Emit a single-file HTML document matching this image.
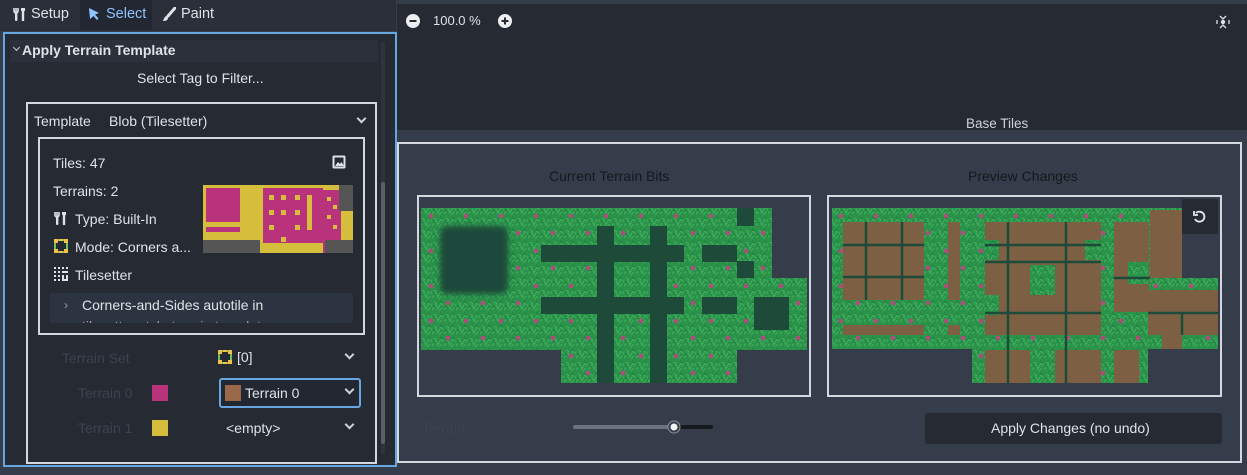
<!DOCTYPE html>
<html><head><meta charset="utf-8"><style>
*{box-sizing:border-box;margin:0;padding:0}
body{width:1247px;height:475px;background:#363d4a;font-family:"Liberation Sans","DejaVu Sans",sans-serif;font-size:14px;color:#dfe2e6;position:relative;overflow:hidden}
.a{position:absolute}
.t{position:absolute;white-space:nowrap}
.chev{position:absolute;width:7px;height:7px;border-right:2px solid #cfd3d9;border-bottom:2px solid #cfd3d9;transform:rotate(45deg)}
</style></head><body>
<div class="a" style="left:0;top:0;width:396px;height:31px;background:#2a2f39"></div>
<div class="a" style="left:80px;top:0;width:72px;height:30px;background:#222731"></div>
<svg class="a" style="left:13px;top:7px" width="14" height="15" viewBox="0 0 14 15"><path d="M3 1v5M1 1v3a2 2 0 0 0 4 0V1" stroke="#dfe2e6" stroke-width="1.6" fill="none"/><rect x="2" y="6" width="2.4" height="8" rx="1" fill="#dfe2e6"/><path d="M10 1v13" stroke="#dfe2e6" stroke-width="2.4"/><path d="M8 1h4v3h-4z" fill="#dfe2e6"/></svg>
<div class="t" style="left:31px;top:6px;font-size:14.5px">Setup</div>
<svg class="a" style="left:87px;top:7px" width="14" height="15" viewBox="0 0 14 15"><path d="M2 1l10 5-4 1.5 3.5 4-1.5 1.5-3.5-4L3 12z" fill="#8ec4ff"/></svg>
<div class="t" style="left:106px;top:6px;font-size:14.5px;color:#8ec4ff">Select</div>
<svg class="a" style="left:162px;top:7px" width="14" height="15" viewBox="0 0 14 15"><path d="M13 1L6 9" stroke="#dfe2e6" stroke-width="3" stroke-linecap="round"/><path d="M5 9c-2 0-3 2-4 5 3 0 5-1 5-3z" fill="#dfe2e6"/></svg>
<div class="t" style="left:181px;top:6px;font-size:14.5px">Paint</div>

<div class="a" style="left:3px;top:32px;width:394px;height:435px;border:2px solid #68a6e2;background:#252a33"></div>
<div class="a" style="left:10px;top:40px;width:368px;height:22px;background:#2b303a"></div>
<div class="chev" style="left:14px;top:45px;width:5px;height:5px;border-width:1.5px"></div>
<div class="t" style="left:22px;top:42px;font-weight:bold;font-size:14px">Apply Terrain Template</div>
<div class="a" style="left:381px;top:42px;width:4px;height:412px;background:#2e333c;border-radius:2px"></div>
<div class="a" style="left:381px;top:182px;width:4px;height:262px;background:#5a5f68;border-radius:2px"></div>
<div class="t" style="left:137px;top:70px">Select Tag to Filter...</div>

<div class="a" style="left:26px;top:102px;width:351px;height:362px;border:2px solid #d4d8de"></div>
<div class="t" style="left:34px;top:113px">Template</div>
<div class="t" style="left:109px;top:113px">Blob (Tilesetter)</div>
<div class="chev" style="left:358px;top:115px"></div>
<div class="a" style="left:38px;top:137px;width:327px;height:198px;border:2px solid #d4d8de"></div>
<div class="t" style="left:53px;top:155px">Tiles: 47</div>
<svg class="a" style="left:332px;top:155px" width="14" height="14" viewBox="0 0 14 14"><rect x="0.5" y="0.5" width="13" height="13" rx="1.5" fill="#dfe2e6"/><rect x="2.5" y="2.5" width="9" height="9" fill="#252a33"/><path d="M3 11l3-4 2 2 1.5-2 2.5 4z" fill="#dfe2e6"/></svg>
<div class="t" style="left:53px;top:183px">Terrains: 2</div>
<svg class="a" style="left:203px;top:185px" width="150" height="68" viewBox="0 0 150 68">
<rect width="150" height="68" fill="#d4be3c"/>
<rect x="3" y="3" width="34" height="34" fill="#b8327c"/>
<rect x="3" y="42" width="34" height="5" fill="#b8327c"/>
<rect x="60" y="3" width="60" height="55" fill="#b8327c"/>
<g fill="#d4be3c"><rect x="66" y="10" width="5" height="5"/><rect x="78" y="10" width="5" height="5"/><rect x="92" y="10" width="5" height="5"/><rect x="66" y="25" width="5" height="5"/><rect x="78" y="25" width="5" height="5"/><rect x="92" y="25" width="5" height="5"/><rect x="66" y="40" width="5" height="5"/><rect x="92" y="40" width="5" height="5"/><rect x="104" y="10" width="5" height="35"/><rect x="78" y="52" width="5" height="5"/></g>
<rect x="120" y="5" width="18" height="63" fill="#b8327c"/>
<g fill="#d4be3c"><rect x="124" y="12" width="4" height="4"/><rect x="130" y="20" width="4" height="4"/><rect x="124" y="30" width="4" height="4"/><rect x="130" y="40" width="4" height="4"/></g>
<rect x="136" y="0" width="14" height="26" fill="#555"/>
<rect x="0" y="55" width="57" height="13" fill="#555"/>
<rect x="122" y="55" width="28" height="13" fill="#555"/>
</svg>
<svg class="a" style="left:54px;top:211px" width="14" height="15" viewBox="0 0 14 15"><path d="M3 1v5M1 1v3a2 2 0 0 0 4 0V1" stroke="#dfe2e6" stroke-width="1.6" fill="none"/><rect x="2" y="6" width="2.4" height="8" rx="1" fill="#dfe2e6"/><path d="M10 1v13" stroke="#dfe2e6" stroke-width="2.4"/><path d="M8 1h4v3h-4z" fill="#dfe2e6"/></svg>
<div class="t" style="left:75px;top:211px">Type: Built-In</div>
<svg class="a" style="left:54px;top:239px" width="14" height="14" viewBox="0 0 14 14"><rect width="14" height="14" fill="#6fc35a"/><rect x="2" y="2" width="10" height="10" fill="#252a33"/><g fill="#f0c24a"><rect x="0" y="0" width="4" height="4"/><rect x="10" y="0" width="4" height="4"/><rect x="0" y="10" width="4" height="4"/><rect x="10" y="10" width="4" height="4"/><rect x="5" y="0" width="4" height="2"/><rect x="5" y="12" width="4" height="2"/></g></svg>
<div class="t" style="left:75px;top:239px">Mode: Corners a...</div>
<svg class="a" style="left:54px;top:267px" width="14" height="14" viewBox="0 0 14 14"><g fill="#dfe2e6"><rect x="0" y="0" width="2" height="2"/><rect x="4" y="0" width="2" height="2"/><rect x="8" y="0" width="2" height="2"/><rect x="12" y="0" width="2" height="2"/><rect x="0" y="4" width="2" height="2"/><rect x="4" y="4" width="2" height="2"/><rect x="8" y="4" width="6" height="2"/><rect x="0" y="8" width="2" height="2"/><rect x="4" y="8" width="2" height="2"/><rect x="8" y="8" width="2" height="6"/><rect x="12" y="8" width="2" height="6"/><rect x="0" y="12" width="2" height="2"/><rect x="4" y="12" width="2" height="2"/><rect x="8" y="12" width="6" height="2"/></g></svg>
<div class="t" style="left:75px;top:267px">Tilesetter</div>
<div class="a" style="left:50px;top:293px;width:303px;height:30px;background:#2d3441;border-radius:3px;overflow:hidden">
<div class="t" style="left:14px;top:5px;color:#9aa0a8;font-size:12px">›</div>
<div class="t" style="left:32px;top:4px">Corners-and-Sides autotile in</div>
<div class="t" style="left:32px;top:25px;color:#9aa0a8">tilesetter style terrain template</div>
</div>

<div class="t" style="left:62px;top:350px;color:#3d434d">Terrain Set</div>
<svg class="a" style="left:218px;top:350px" width="14" height="14" viewBox="0 0 14 14"><rect width="14" height="14" fill="#6fc35a"/><rect x="2" y="2" width="10" height="10" fill="#252a33"/><g fill="#f0c24a"><rect x="0" y="0" width="4" height="4"/><rect x="10" y="0" width="4" height="4"/><rect x="0" y="10" width="4" height="4"/><rect x="10" y="10" width="4" height="4"/><rect x="5" y="0" width="4" height="2"/><rect x="5" y="12" width="4" height="2"/></g></svg>
<div class="t" style="left:237px;top:349px">[0]</div>
<div class="chev" style="left:346px;top:351px"></div>
<div class="t" style="left:78px;top:385px;color:#3d434d">Terrain 0</div>
<div class="a" style="left:152px;top:385px;width:16px;height:16px;background:#b8327c"></div>
<div class="a" style="left:219px;top:378px;width:142px;height:30px;border:2px solid #68a6e2;border-radius:3px;background:#222731"></div>
<div class="a" style="left:225px;top:385px;width:16px;height:16px;background:#9a6848"></div>
<div class="t" style="left:245px;top:385px">Terrain 0</div>
<div class="chev" style="left:346px;top:386px"></div>
<div class="t" style="left:78px;top:420px;color:#3d434d">Terrain 1</div>
<div class="a" style="left:152px;top:420px;width:16px;height:16px;background:#d4be3c"></div>
<div class="t" style="left:226px;top:420px">&lt;empty&gt;</div>
<div class="chev" style="left:346px;top:421px"></div>

<div class="a" style="left:397px;top:4px;width:850px;height:126px;background:#262a33"></div>
<svg class="a" style="left:406px;top:14px" width="14" height="14"><circle cx="7" cy="7" r="7" fill="#eceef1"/><rect x="3.5" y="6" width="7" height="2" fill="#262a33"/></svg>
<div class="t" style="left:433px;top:13px;font-size:13px">100.0 %</div>
<svg class="a" style="left:498px;top:14px" width="14" height="14"><circle cx="7" cy="7" r="7" fill="#eceef1"/><rect x="3.5" y="6" width="7" height="2" fill="#262a33"/><rect x="6" y="3.5" width="2" height="7" fill="#262a33"/></svg>
<svg class="a" style="left:1216px;top:15px" width="14" height="14" viewBox="0 0 14 14" fill="none" stroke="#dfe2e6" stroke-width="1.3"><path d="M4 1l3 3 3-3M4 13l3-3 3 3M1 5v4M13 5v4"/><circle cx="7" cy="7" r="1.5" fill="#dfe2e6"/></svg>
<div class="t" style="left:966px;top:116px;font-size:13.5px;color:#cfd3d9">Base Tiles</div>

<div class="a" style="left:397px;top:142px;width:845px;height:321px;border:2px solid #d4d8de"></div>
<div class="t" style="left:549px;top:168px;color:#15181d">Current Terrain Bits</div>
<div class="t" style="left:968px;top:168px;color:#15181d">Preview Changes</div>
<div class="a" style="left:417px;top:195px;width:394px;height:202px;border:2px solid #d4d8de"></div>
<div class="a" style="left:827px;top:195px;width:395px;height:202px;border:2px solid #d4d8de"></div>

<svg class="a" style="left:0;top:0" width="1247" height="475">
<defs>
<pattern id="g" width="12" height="12" patternUnits="userSpaceOnUse">
<rect width="12" height="12" fill="#2a9249"/>
<path d="M0 10l4-5 2 4 3-6 3 3M2 2l3 2M7 11l3-3" stroke="#45b866" stroke-width="0.8" fill="none"/>
<path d="M1 6l3 1M8 1l2 2" stroke="#1f7a3d" stroke-width="1"/>
</pattern>
<pattern id="d" width="35" height="35" patternUnits="userSpaceOnUse" x="421" y="208">
<circle cx="10" cy="8" r="2.4" fill="#a8507a"/><circle cx="27" cy="25" r="2.4" fill="#a8507a"/>
</pattern>
<pattern id="d2" width="35" height="35" patternUnits="userSpaceOnUse" x="831" y="208">
<circle cx="10" cy="8" r="2.4" fill="#a8507a"/><circle cx="27" cy="25" r="2.4" fill="#a8507a"/>
</pattern>
<filter id="bl"><feGaussianBlur stdDeviation="3"/></filter>
</defs>
<g>
<path d="M421 208H772V278H807V350H737V383H561V350H421Z" fill="url(#g)"/>
<path d="M421 208H772V278H807V350H737V383H561V350H421Z" fill="url(#d)"/>
<g fill="#1e4a3a">
<rect x="440" y="226" width="68" height="68" rx="8" filter="url(#bl)"/>
<rect x="597" y="226" width="17" height="157"/>
<rect x="650" y="226" width="17" height="157"/>
<rect x="541" y="245" width="143" height="17"/>
<rect x="541" y="297" width="143" height="17"/>
<rect x="702" y="245" width="35" height="17"/>
<rect x="737" y="208" width="17" height="18"/>
<rect x="737" y="261" width="17" height="17"/>
<rect x="702" y="297" width="35" height="17"/>
<rect x="754" y="297" width="35" height="33"/>
<rect x="614" y="262" width="36" height="35" fill="url(#g)"/>
</g>
</g>
<g>
<path d="M832 208H1182V278H1218V349H1148V383H972V349H832Z" fill="url(#g)"/>
<path d="M832 208H1182V278H1218V349H1148V383H972V349H832Z" fill="url(#d2)"/>
<g fill="#7d5f44">
<rect x="843" y="222" width="81" height="78"/>
<rect x="948" y="222" width="12" height="78"/>
<rect x="843" y="325" width="81" height="10"/>
<rect x="948" y="325" width="12" height="10"/>
<rect x="985" y="222" width="116" height="113"/>
<rect x="1114" y="222" width="35" height="90"/>
<rect x="1150" y="210" width="32" height="68"/>
<rect x="1148" y="290" width="70" height="45"/>
<rect x="1162" y="335" width="20" height="14"/>
<rect x="985" y="350" width="116" height="33"/>
<rect x="1114" y="350" width="25" height="33"/>
</g>
<g fill="url(#g)">
<rect x="1030" y="265" width="25" height="30"/>
<rect x="985" y="240" width="14" height="20"/>
<rect x="985" y="295" width="14" height="20"/>
<rect x="1085" y="240" width="16" height="20"/>
<rect x="1030" y="350" width="25" height="33"/>
<rect x="1128" y="262" width="20" height="22"/>
</g>
<g stroke="#1e4a3a" stroke-width="2.5">
<path d="M866 222V300M902 222V300M843 245H924M843 277H924"/>
<path d="M1008 222V383M1066 222V383M985 245H1101M985 313H1101M985 262H1101"/>
<path d="M1114 278H1150M1182 312V335M1148 313H1218"/>
</g>
</g>
<rect x="573" y="425" width="101" height="4" rx="2" fill="#6e747d"/>
<rect x="674" y="425" width="39" height="4" rx="2" fill="#15181d"/>
<circle cx="674" cy="427" r="6" fill="#363d4a" stroke="#8b9099" stroke-width="1"/>
<circle cx="674" cy="427" r="3.5" fill="#f3f4f6"/>
</svg>
<div class="a" style="left:1182px;top:199px;width:36px;height:35px;background:#262a33;border-radius:2px"></div>
<svg class="a" style="left:1192px;top:209px" width="15" height="15" viewBox="0 0 15 15" fill="none" stroke="#e6e8eb" stroke-width="1.8"><path d="M4 4a5 5 0 1 1-1 6"/><path d="M2 2v4h4" fill="none"/></svg>
<div class="t" style="left:422px;top:420px;color:#3d434d">Terrain</div>
<div class="a" style="left:925px;top:413px;width:297px;height:31px;background:#262a33;border-radius:3px"></div>
<div class="t" style="left:991px;top:420px;color:#dfe2e6">Apply Changes (no undo)</div>
</body></html>
